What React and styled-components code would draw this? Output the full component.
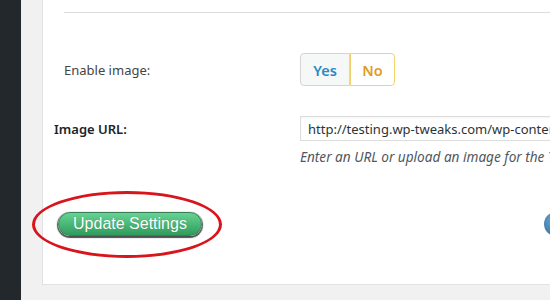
import React from "react";
import styled, { createGlobalStyle } from "styled-components";

const GlobalStyle = createGlobalStyle`
  html, body {
    margin: 0;
    padding: 0;
    width: 550px;
    height: 300px;
    overflow: hidden;
    background: #f1f1f1;
  }
`;

const Screen = styled.div`
  display: flex;
  width: 550px;
  height: 300px;
  overflow: hidden;
  font-family: "Noto Sans", "Open Sans", sans-serif;
`;

const Sidebar = styled.div`
  width: 21px;
  flex: none;
  background: #23282d;
`;

const Wrap = styled.div`
  flex: 1;
  padding-left: 21px;
  background: #f1f1f1;
  min-width: 0;
`;

const Panel = styled.div`
  position: relative;
  width: 560px;
  height: 285px;
  box-sizing: border-box;
  background: #fff;
  border-left: 1px solid #e2e2e2;
  border-bottom: 1px solid #e2e2e2;
  display: flex;
  flex-direction: column;
`;

const Rule = styled.div`
  height: 1px;
  background: #dcdcdc;
  margin: 12px 0 0 21px;
`;

const Row = styled.div`
  display: grid;
  grid-template-columns: ${(p) => p.$labelWidth}px 1fr;
  align-items: center;
  padding-left: ${(p) => p.$indent}px;
  margin-top: ${(p) => p.$top}px;
`;

const Label = styled.div`
  font-size: 13px;
  color: ${(p) => (p.$strong ? "#1d2327" : "#444")};
  font-weight: ${(p) => (p.$strong ? 600 : 400)};
`;

const Toggle = styled.div`
  display: flex;
  height: 33px;
`;

const Seg = styled.div`
  display: flex;
  align-items: center;
  justify-content: center;
  box-sizing: border-box;
  width: ${(p) => p.$w}px;
  font-size: 14.5px;
  font-weight: 600;
  color: ${(p) => p.$color};
  background: ${(p) => p.$bg};
  border: 1px solid ${(p) => p.$border};
  border-radius: ${(p) => p.$radius};
`;

const Field = styled.div`
  display: flex;
  flex-direction: column;
`;

const Input = styled.div`
  height: 25px;
  box-sizing: border-box;
  border: 1px solid #dddddd;
  border-right: none;
  box-shadow: inset 0 1px 2px rgba(0, 0, 0, 0.05);
  padding: 0 0 0 7px;
  display: flex;
  align-items: center;
  font-size: 13px;
  color: #2c3338;
  white-space: nowrap;
  overflow: hidden;
`;

const Help = styled.div`
  margin-top: 6px;
  font-size: 13.6px;
  font-style: italic;
  color: #50575e;
  white-space: nowrap;
`;

const Actions = styled.div`
  display: flex;
  justify-content: space-between;
  align-items: center;
  margin-top: 46px;
  padding-left: 15px;
`;

const Mark = styled.div`
  position: relative;
`;

const UpdateButton = styled.div`
  width: 144px;
  height: 24px;
  box-sizing: border-box;
  border-radius: 12px;
  background: linear-gradient(#66d394, #2f9c5b);
  border: 1px solid #3a8056;
  box-shadow: 0 1px 1px 1px #4b4f52;
  color: #fff;
  font-family: "Liberation Sans", Arial, sans-serif;
  font-size: 16px;
  display: flex;
  align-items: center;
  justify-content: center;
  text-shadow: 0 0 1px rgba(0, 0, 0, 0.25);
`;

const Ellipse = styled.div`
  position: absolute;
  left: -26px;
  top: -21px;
  width: 190px;
  height: 67px;
  box-sizing: border-box;
  border: 3px solid #d8141c;
  border-radius: 50%;
  pointer-events: none;
`;

const RoundButton = styled.div`
  width: 24px;
  height: 24px;
  border-radius: 50%;
  background: radial-gradient(circle at 40% 35%, #6aa4cf, #2b6594);
  margin-right: 34px;
`;

export default function App() {
  return (
    <>
      <GlobalStyle />
      <Screen>
        <Sidebar />
        <Wrap>
          <Panel>
            <Rule />
            <Row $labelWidth={236} $indent={21} $top={40}>
              <Label>Enable image:</Label>
              <Toggle>
                <Seg $w={50} $color="#2a8ac2" $bg="#f6f7f7" $border="#d4d4d4" $radius="4px 0 0 4px">
                  Yes
                </Seg>
                <Seg $w={45} $color="#e09b24" $bg="#fff" $border="#f2d36b" $radius="0 4px 4px 0">
                  No
                </Seg>
              </Toggle>
            </Row>
            <Row $labelWidth={246} $indent={11} $top={30}>
              <Label $strong>Image URL:</Label>
              <Field>
                <Input>http://testing.wp-tweaks.com/wp-content/uploads/2018/image.png</Input>
              </Field>
            </Row>
            <Row $labelWidth={246} $indent={11} $top={0}>
              <span />
              <Help>Enter an URL or upload an image for the Top bar.</Help>
            </Row>
            <Actions>
              <Mark>
                <UpdateButton>Update Settings</UpdateButton>
                <Ellipse />
              </Mark>
              <RoundButton />
            </Actions>
          </Panel>
        </Wrap>
      </Screen>
    </>
  );
}
